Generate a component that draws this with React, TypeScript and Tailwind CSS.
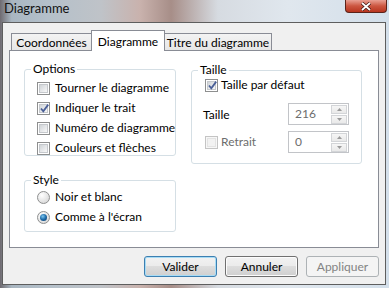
import React from 'react';

const font = { fontFamily: 'Lato, "Noto Sans", sans-serif' };

function Check({ checked, disabled }: { checked?: boolean; disabled?: boolean }) {
  return (
    <span
      className={`relative flex h-[13px] w-[13px] shrink-0 items-center justify-center border ${
        disabled ? 'border-[#c4c4c4] bg-[#f7f7f7]' : 'border-[#8e8f8f] bg-white'
      }`}
    >
      <span
        className={`h-[9px] w-[9px] border ${
          disabled
            ? 'border-[#e3e3e3] bg-[#f2f2f2]'
            : 'border-[#c5c8cc] bg-[linear-gradient(135deg,#d0d4d8,#f8f8f8)]'
        }`}
      />
      {checked && (
        <svg className="absolute left-[1px] top-[0px]" width="11" height="11" viewBox="0 0 11 11">
          <path d="M2 5.5 L4.3 8.3 L9.2 1.6" fill="none" stroke="#4a5f97" strokeWidth="1.8" />
        </svg>
      )}
    </span>
  );
}

function Radio({ checked }: { checked?: boolean }) {
  return (
    <span className="flex h-[13px] w-[13px] shrink-0 items-center justify-center rounded-full border border-[#8e8f8f] bg-[radial-gradient(circle_at_35%_30%,#ffffff,#dedede_70%,#cfcfcf)]">
      {checked && (
        <span className="h-[7px] w-[7px] rounded-full bg-[radial-gradient(circle_at_40%_35%,#7cc6ef,#1d6aa8_50%,#0b3560)]" />
      )}
    </span>
  );
}

function Spin({ value }: { value: string }) {
  return (
    <div className="flex h-[22px] w-[61px] items-center border border-[#c2c4c8] bg-white pl-[6px] pr-[1px]">
      <span className="flex-1 text-[#6d6d6d]">{value}</span>
      <div className="flex flex-col gap-[1px]">
        {[0, 1].map((i) => (
          <div
            key={i}
            className="flex h-[9px] w-[16px] items-center justify-center border border-[#d3d5d8] bg-[linear-gradient(#f6f6f6,#e9e9e9)]"
          >
            <svg width="5" height="3" viewBox="0 0 5 3">
              <path d={i === 0 ? 'M0 3 L2.5 0 L5 3 Z' : 'M0 0 L2.5 3 L5 0 Z'} fill="#9a9a9a" />
            </svg>
          </div>
        ))}
      </div>
    </div>
  );
}

function Group({ title, className, children }: { title: string; className: string; children: React.ReactNode }) {
  return (
    <fieldset className={`rounded-[3px] border border-[#d5dfe5] ${className}`}>
      <legend className="ml-[6px] px-[2px] leading-[12px] text-black">{title}</legend>
      {children}
    </fieldset>
  );
}

export default function App() {
  return (
    <div
      className="flex h-[288px] w-[389px] flex-col overflow-hidden bg-[linear-gradient(90deg,#6e6a70_0%,#a9b6c1_3%,#b4c0ca_12%,#bfc3c8_26%,#c9b2ad_36%,#a78e88_44%,#d6dbe1_56%,#e0e7ee_74%,#d3dfea_100%)] text-[12px] text-black"
      style={font}
    >
      {/* title bar */}
      <div className="relative flex h-[22px] shrink-0 items-center pb-[4px] pl-[4px] text-[13px] text-[#111]">
        Diagramme
        <div className="absolute right-[2px] top-0 flex h-[13px] w-[42px] items-center justify-center rounded-b-[4px] border border-t-0 border-[#5b2319] bg-[linear-gradient(#e9a093,#cc5640_50%,#b8351f)]">
          <svg width="12" height="9" viewBox="0 0 12 9">
            <path d="M2 1 L10 8 M10 1 L2 8" stroke="#3a1410" strokeWidth="3.2" />
            <path d="M2 1 L10 8 M10 1 L2 8" stroke="#ffffff" strokeWidth="1.8" />
          </svg>
        </div>
      </div>

      {/* client area */}
      <div className="ml-[2px] flex h-[263px] w-[384px] shrink-0 flex-col border border-[#5e5e5e] bg-[#f0f0f0] pl-[6px] pr-[6px] pt-[7px]">
        {/* tabs */}
        <div className="flex h-[20px] items-end whitespace-nowrap pl-[2px]">
          <div className="flex h-[17px] w-[81px] items-center justify-center border border-b-0 border-[#898c95] bg-[linear-gradient(#f3f3f3,#e6e6e6)] pt-[1px]">
            Coordonnées
          </div>
          <div className="relative z-10 -mx-px mb-[-1px] flex h-[21px] w-[74px] items-start justify-center border border-b-0 border-[#898c95] bg-white pt-[2px]">
            Diagramme
          </div>
          <div className="flex h-[17px] w-[108px] items-center justify-center border border-b-0 border-[#898c95] bg-[linear-gradient(#f3f3f3,#e6e6e6)] pt-[1px]">
            Titre du diagramme
          </div>
        </div>

        {/* panel */}
        <div className="flex h-[198px] w-[370px] border border-[#898c95] bg-white pl-[14px] pt-[12px]">
          <div className="flex w-[152px] flex-col">
            <Group title="Options" className="h-[93px] w-[152px]">
              <div className="mt-[4px] flex flex-col gap-[2px] pl-[12px]">
                {[
                  ['Tourner le diagramme', false],
                  ['Indiquer le trait', true],
                  ['Numéro de diagramme', false],
                  ['Couleurs et flèches', false],
                ].map(([label, on]) => (
                  <div key={label as string} className="flex h-[18px] items-center gap-[5px] whitespace-nowrap">
                    <Check checked={on as boolean} />
                    <span>{label}</span>
                  </div>
                ))}
              </div>
            </Group>
            <Group title="Style" className="mt-[18px] h-[58px] w-[152px]">
              <div className="mt-[2px] flex flex-col gap-[2px] pl-[12px]">
                <div className="flex h-[18px] items-center gap-[5px]">
                  <Radio />
                  <span>Noir et blanc</span>
                </div>
                <div className="flex h-[18px] items-center gap-[5px]">
                  <Radio checked />
                  <span>Comme à l'écran</span>
                </div>
              </div>
            </Group>
          </div>

          <div className="ml-[15px] mt-[1px]">
            <Group title="Taille" className="h-[100px] w-[171px]">
              <div className="flex flex-col pl-[11px] pr-[12px]">
                <div className="flex h-[18px] items-center gap-[3px] pl-[2px]">
                  <Check checked />
                  <span>Taille par défaut</span>
                </div>
                <div className="mt-[9px] flex items-center justify-between">
                  <span className="pt-[2px]">Taille</span>
                  <Spin value="216" />
                </div>
                <div className="mt-[6px] flex items-center justify-between">
                  <div className="flex items-center gap-[3px] pl-[2px]">
                    <Check disabled />
                    <span className="text-[#6d6d6d]">Retrait</span>
                  </div>
                  <Spin value="0" />
                </div>
              </div>
            </Group>
          </div>
        </div>

        {/* buttons */}
        <div className="mt-[8px] flex justify-end gap-[8px]">
          <button className="h-[21px] w-[73px] rounded-[3px] border border-[#3c7fb1] bg-[linear-gradient(#f2f2f2,#ebebeb_50%,#dddddd_50%,#cfcfcf)] text-black shadow-[inset_0_0_0_1px_#a8dcf5]">
            Valider
          </button>
          <button className="h-[21px] w-[73px] rounded-[3px] border border-[#707070] bg-[linear-gradient(#f2f2f2,#ebebeb_50%,#dddddd_50%,#cfcfcf)] text-black shadow-[inset_0_0_0_1px_#fcfcfc]">
            Annuler
          </button>
          <button className="h-[21px] w-[73px] rounded-[3px] border border-[#adb2b5] bg-[#f4f4f4] text-[#838383]">
            Appliquer
          </button>
        </div>
      </div>
    </div>
  );
}
